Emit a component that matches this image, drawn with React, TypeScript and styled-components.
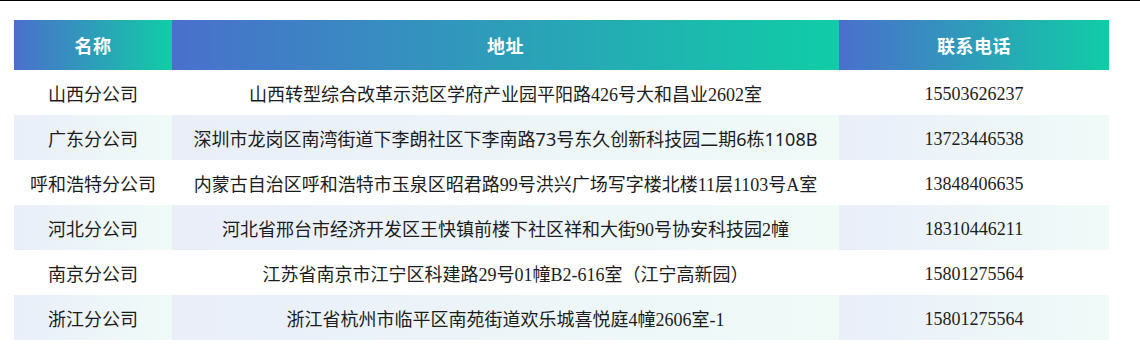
import React from "react";
import styled, { createGlobalStyle } from "styled-components";

const GlobalStyle = createGlobalStyle`
  html, body {
    margin: 0;
    padding: 0;
    background: #ffffff;
  }
  body {
    border-top: 1px solid #000000;
    font-family: "Liberation Serif", "Noto Sans CJK SC", serif;
  }
`;

const Page = styled.div`
  padding: 19px 14px 24px 14px;
`;

const Table = styled.table`
  width: 1095px;
  border-collapse: collapse;
  border-spacing: 0;
  table-layout: fixed;
`;

const HeadCell = styled.th<{ $w: number }>`
  width: ${(p) => p.$w}px;
  height: 50px;
  padding: 0;
  background: linear-gradient(to right, #4a6fcc, #10cda6);
  color: #ffffff;
  font-size: 18px;
  font-weight: bold;
  text-align: center;
  vertical-align: middle;
  letter-spacing: 0.5px;
`;

const Row = styled.tr<{ $striped: boolean }>`
  height: 45px;
  td {
    background: ${(p) =>
      p.$striped ? "linear-gradient(to right, #e9eef9, #f0fbf8)" : "#ffffff"};
  }
`;

const Cell = styled.td<{ $sans?: boolean; $num?: boolean }>`
  padding: ${(p) => (p.$num ? "4px 0 0 0" : "0")};
  color: #1c1c1c;
  font-size: 18px;
  text-align: center;
  vertical-align: middle;
  white-space: nowrap;
  font-family: ${(p) =>
    p.$sans
      ? `"Noto Sans", "Noto Sans CJK SC", sans-serif`
      : `"Liberation Serif", "Noto Sans CJK SC", serif`};
`;

type Office = { name: string; address: string; phone: string; sans?: boolean };

const offices: Office[] = [
  {
    name: "山西分公司",
    address: "山西转型综合改革示范区学府产业园平阳路426号大和昌业2602室",
    phone: "15503626237",
  },
  {
    name: "广东分公司",
    address: "深圳市龙岗区南湾街道下李朗社区下李南路73号东久创新科技园二期6栋1108B",
    phone: "13723446538",
    sans: true,
  },
  {
    name: "呼和浩特分公司",
    address: "内蒙古自治区呼和浩特市玉泉区昭君路99号洪兴广场写字楼北楼11层1103号A室",
    phone: "13848406635",
  },
  {
    name: "河北分公司",
    address: "河北省邢台市经济开发区王快镇前楼下社区祥和大街90号协安科技园2幢",
    phone: "18310446211",
  },
  {
    name: "南京分公司",
    address: "江苏省南京市江宁区科建路29号01幢B2-616室（江宁高新园）",
    phone: "15801275564",
  },
  {
    name: "浙江分公司",
    address: "浙江省杭州市临平区南苑街道欢乐城喜悦庭4幢2606室-1",
    phone: "15801275564",
  },
];

export default function App() {
  return (
    <>
      <GlobalStyle />
      <Page>
        <Table>
          <thead>
            <tr>
              <HeadCell $w={158}>名称</HeadCell>
              <HeadCell $w={667}>地址</HeadCell>
              <HeadCell $w={270}>联系电话</HeadCell>
            </tr>
          </thead>
          <tbody>
            {offices.map((o, i) => (
              <Row key={o.name} $striped={i % 2 === 1}>
                <Cell>{o.name}</Cell>
                <Cell $sans={o.sans}>{o.address}</Cell>
                <Cell $num>{o.phone}</Cell>
              </Row>
            ))}
          </tbody>
        </Table>
      </Page>
    </>
  );
}
